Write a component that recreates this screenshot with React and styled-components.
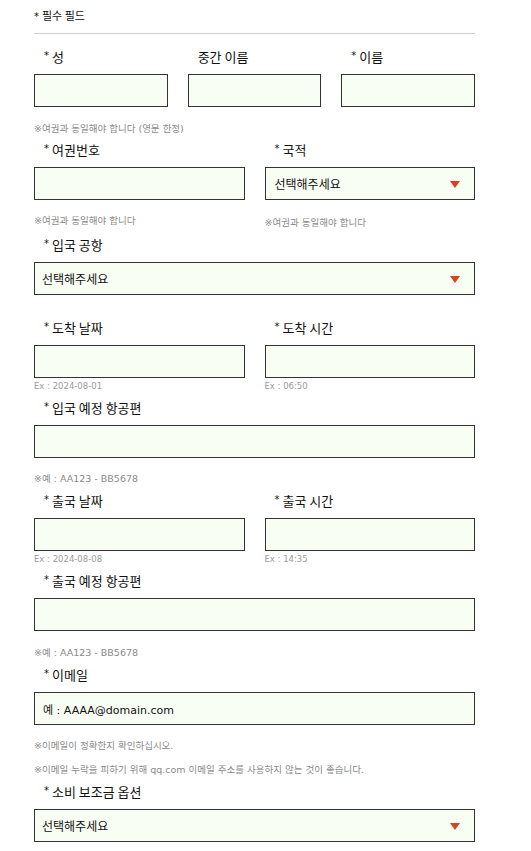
import styled, { createGlobalStyle } from "styled-components"

const GlobalStyle = createGlobalStyle`
  html, body {
    margin: 0;
    padding: 0;
    background: #fff;
  }
  body {
    font-family: "DejaVu Sans", "Noto Sans CJK KR", sans-serif;
    color: #111;
  }
`

const Page = styled.div`
  width: 441px;
  padding: 7px 0 10px 34px;
`

const Header = styled.div`
  height: 16px;
  font-size: 11px;
  line-height: 16px;
  font-family: "Noto Sans CJK KR", sans-serif;
`

const Divider = styled.div`
  height: 1px;
  background: #cfcfcf;
  margin: 10px 0 13px;
`

const Row = styled.div`
  display: grid;
  grid-template-columns: repeat(${(p) => p.cols || 1}, 1fr);
  column-gap: 20px;
  margin-top: ${(p) => p.mt || 0}px;
`

const Field = styled.div`
  display: flex;
  flex-direction: column;
  min-width: 0;
`

const Label = styled.div`
  height: 18px;
  display: flex;
  align-items: center;
  font-size: 13px;
  padding-left: 10px;
  margin-bottom: 9px;
  white-space: nowrap;
  font-family: "Noto Sans CJK KR", sans-serif;
`

const Star = styled.span`
  font-size: 10px;
  line-height: 1;
  margin-right: 3px;
  font-family: "DejaVu Sans", sans-serif;
`

const Box = styled.div`
  box-sizing: border-box;
  height: 33px;
  border: 1px solid #333;
  background: #f8fef4;
  display: flex;
  align-items: center;
  justify-content: space-between;
  padding: 0 14px 0 ${(p) => p.pl || 8}px;
  font-size: ${(p) => p.fs || 12}px;
  color: #111;
`

const Arrow = styled.span`
  width: 0;
  height: 0;
  border-left: 5px solid transparent;
  border-right: 5px solid transparent;
  border-top: 7px solid #d9421b;
  margin-top: 1px;
`

const Hint = styled.div`
  height: 12px;
  display: flex;
  align-items: center;
  font-size: 9.5px;
  color: #8a8a8a;
  white-space: nowrap;
  margin-top: ${(p) => p.mt || 0}px;
`

const Ex = styled.div`
  height: 11px;
  display: flex;
  align-items: center;
  font-size: 8.5px;
  color: #9a9a9a;
  margin-top: 2px;
`

const Req = ({ children }) => (
  <Label>
    <Star>*</Star>
    {children}
  </Label>
)

const Select = ({ pl }) => (
  <Box pl={pl}>
    <span>선택해주세요</span>
    <Arrow />
  </Box>
)

export default function App() {
  return (
    <>
      <GlobalStyle />
      <Page>
        <Header>
          <Star>*</Star>필수 필드
        </Header>
        <Divider />

        <Row cols={3}>
          <Field>
            <Req>성</Req>
            <Box />
          </Field>
          <Field>
            <Label>중간 이름</Label>
            <Box />
          </Field>
          <Field>
            <Req>이름</Req>
            <Box />
          </Field>
        </Row>
        <Hint mt={15}>※여권과 동일해야 합니다 (영문 한정)</Hint>

        <Row cols={2} mt={6}>
          <Field>
            <Req>여권번호</Req>
            <Box />
            <Hint mt={14}>※여권과 동일해야 합니다</Hint>
          </Field>
          <Field>
            <Req>국적</Req>
            <Select pl={9} />
            <Hint mt={16}>※여권과 동일해야 합니다</Hint>
          </Field>
        </Row>

        <Row mt={7}>
          <Field>
            <Req>입국 공항</Req>
            <Select pl={7} />
          </Field>
        </Row>

        <Row cols={2} mt={23}>
          <Field>
            <Req>도착 날짜</Req>
            <Box />
            <Ex>Ex : 2024-08-01</Ex>
          </Field>
          <Field>
            <Req>도착 시간</Req>
            <Box />
            <Ex>Ex : 06:50</Ex>
          </Field>
        </Row>

        <Row mt={7}>
          <Field>
            <Req>입국 예정 항공편</Req>
            <Box />
            <Hint mt={14}>※예 : AA123 - BB5678</Hint>
          </Field>
        </Row>

        <Row cols={2} mt={7}>
          <Field>
            <Req>출국 날짜</Req>
            <Box />
            <Ex>Ex : 2024-08-08</Ex>
          </Field>
          <Field>
            <Req>출국 시간</Req>
            <Box />
            <Ex>Ex : 14:35</Ex>
          </Field>
        </Row>

        <Row mt={7}>
          <Field>
            <Req>출국 예정 항공편</Req>
            <Box />
            <Hint mt={15}>※예 : AA123 - BB5678</Hint>
          </Field>
        </Row>

        <Row mt={7}>
          <Field>
            <Req>이메일</Req>
            <Box pl={8} fs={11}>예 : AAAA@domain.com</Box>
            <Hint mt={14}>※이메일이 정확한지 확인하십시오.</Hint>
            <Hint mt={12}>※이메일 누락을 피하기 위해 qq.com 이메일 주소를 사용하지 않는 것이 좋습니다.</Hint>
          </Field>
        </Row>

        <Row mt={7}>
          <Field>
            <Req>소비 보조금 옵션</Req>
            <Select pl={7} />
          </Field>
        </Row>
      </Page>
    </>
  )
}
